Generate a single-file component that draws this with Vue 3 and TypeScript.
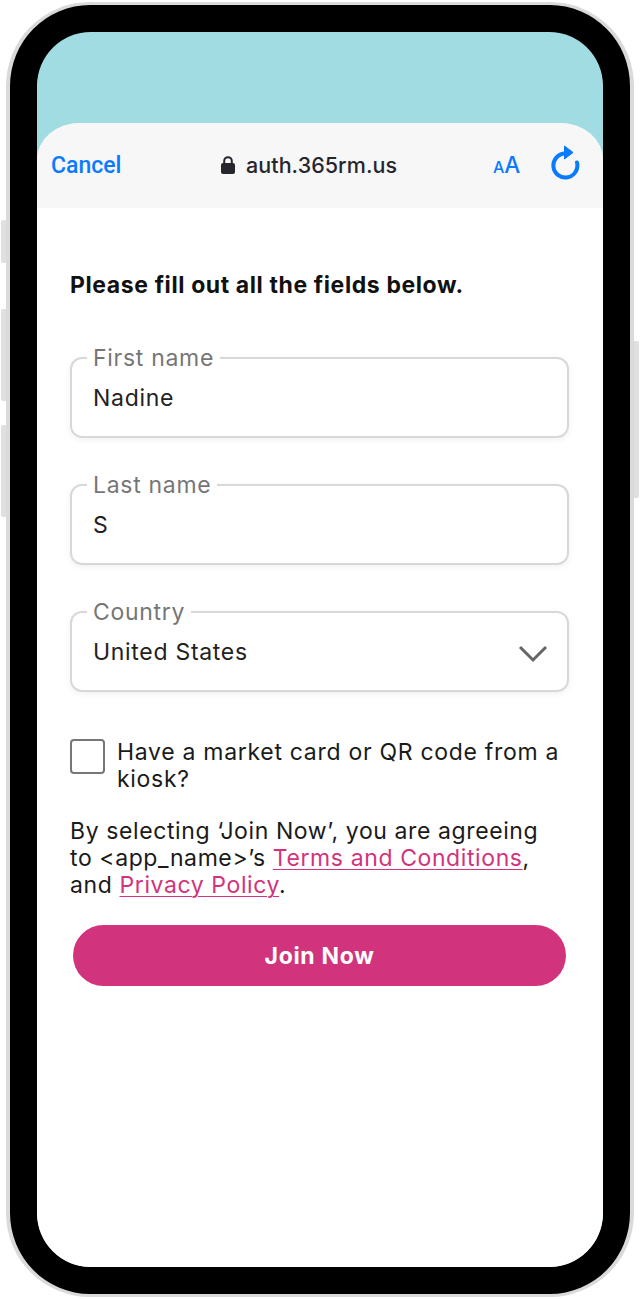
<script setup lang="ts">
interface Field {
  label: string
  value: string
  select?: boolean
}
const fields: Field[] = [
  { label: 'First name', value: 'Nadine' },
  { label: 'Last name', value: 'S' },
  { label: 'Country', value: 'United States', select: true },
]
</script>

<template>
  <div class="page">
    <i class="side side-a"></i>
    <i class="side side-b"></i>
    <i class="side side-c"></i>
    <i class="side side-d"></i>
    <div class="phone">
      <div class="screen">
        <div class="sheet">
          <header class="bar">
            <span class="cancel">Cancel</span>
            <span class="address">
              <svg class="lock" width="14" height="18" viewBox="0 0 14 18">
                <path d="M3.200 8V5a3.800 3.800 0 0 1 7.600 0v3" fill="none" stroke="#26262e" stroke-width="2" />
                <rect x="0" y="7" width="14" height="11" rx="2" fill="#26262e" />
              </svg>
              <span>auth.365rm.us</span>
            </span>
            <span class="aa"><small>A</small>A</span>
            <svg class="reload" width="30" height="36" viewBox="0 0 30 36">
              <path d="M27 17.500A12 12 0 1 1 15 8.500" fill="none" stroke="#0a7aff" stroke-width="4" stroke-linecap="round" />
              <path d="M14.500 1 L23 7.500 L14.500 14 Z" fill="#0a7aff" stroke="#0a7aff" stroke-width="1" stroke-linejoin="round" />
            </svg>
          </header>
          <main class="form">
            <h1 class="title">Please fill out all the fields below.</h1>
            <div class="fields">
              <div v-for="f in fields" :key="f.label" class="field">
                <span class="legend">{{ f.label }}</span>
                <span class="value">{{ f.value }}</span>
                <svg v-if="f.select" class="chevron" width="30" height="18" viewBox="0 0 30 18">
                  <path d="M2 2 L15 15 L28 2" fill="none" stroke="#666" stroke-width="3" />
                </svg>
              </div>
            </div>
            <div class="check-row">
              <span class="box"></span>
              <span>Have a market card or QR code from a kiosk?</span>
            </div>
            <p class="legal">
              By selecting ‘Join Now’, you are agreeing to &lt;app_name&gt;’s
              <a class="link">Terms and Conditions</a>, and <a class="link">Privacy Policy</a>.
            </p>
            <button class="join" type="button">Join Now</button>
          </main>
        </div>
      </div>
    </div>
  </div>
</template>

<style>
html, body { margin: 0; background: #fff; }
</style>

<style scoped>
.page {
  position: relative;
  width: 640px;
  height: 1299px;
  padding: 2px 6px;
  box-sizing: border-box;
  font-family: Inter, "Liberation Sans", sans-serif;
  overflow: hidden;
}
.side {
  position: absolute;
  width: 5px;
  background: #e0e0e0;
  border-radius: 2px 0 0 2px;
}
.side-a { left: 1px; top: 220px; height: 43px; }
.side-b { left: 1px; top: 309px; height: 92px; }
.side-c { left: 1px; top: 425px; height: 92px; }
.side-d { left: 634px; top: 341px; height: 157px; border-radius: 0 2px 2px 0; }
.phone {
  position: relative;
  height: 1295px;
  box-sizing: border-box;
  padding: 27px;
  background: #000;
  border: 3px solid #dadada;
  border-left-width: 4px;
  border-right-width: 4px;
  border-radius: 84px;
}
.screen {
  height: 100%;
  background: #a2dce3;
  border-radius: 54px;
  overflow: hidden;
  padding-top: 91px;
  box-sizing: border-box;
}
.sheet {
  height: 100%;
  background: #fff;
  border-radius: 43px 43px 0 0 / 37px 37px 0 0;
  overflow: hidden;
}
.bar {
  height: 85px;
  background: #f7f7f7;
  display: flex;
  align-items: center;
  padding: 0 23px 0 14px;
  box-sizing: border-box;
}
.cancel {
  color: #0a7aff;
  font-family: Roboto, Inter, sans-serif;
  font-size: 23px;
  font-weight: 500;
  width: 170px;
  flex: none;
}
.address {
  display: flex;
  align-items: center;
  gap: 11px;
  width: 272px;
  flex: none;
  color: #26262e;
  font-size: 21.500px;
  font-weight: 500;
  letter-spacing: 0.05px;
  margin-top: -1px;
}
.aa {
  color: #0a7aff;
  font-size: 22.500px;
  font-weight: 500;
  width: 58px;
  flex: none;
  line-height: 1;
}
.aa small { font-size: 16px; }
.reload { flex: none; margin-top: -5px; margin-left: -1px; }
.form {
  padding: 64px 34px 0 33px;
  color: #1a1a1a;
  font-size: 23px;
  line-height: 27px;
  letter-spacing: 0.7px;
}
.title {
  margin: 0 0 58px;
  font-size: 23px;
  line-height: 27px;
  font-weight: 700;
  letter-spacing: 0.6px;
  color: #111;
}
.fields { display: flex; flex-direction: column; gap: 46px; }
.field {
  position: relative;
  height: 81px;
  box-sizing: border-box;
  border: 2px solid #d8d8d8;
  border-radius: 12px;
  box-shadow: 0 2px 6px rgba(0, 0, 0, 0.06);
  display: flex;
  align-items: center;
  padding: 0 21px;
}
.legend {
  position: absolute;
  left: 15px;
  top: -14px;
  padding: 0 6px;
  background: #fff;
  color: #767676;
  font-size: 23px;
  line-height: 26px;
}
.value { color: #222; margin-top: 1px; }
.chevron { position: absolute; right: 19px; top: 32px; }
.check-row {
  margin-top: 47px;
  display: flex;
  gap: 12px;
  align-items: flex-start;
}
.box {
  flex: none;
  width: 35px;
  height: 35px;
  box-sizing: border-box;
  border: 2px solid #777;
  border-radius: 4px;
}
.legal { margin: 25px 0 26px; padding-right: 20px; letter-spacing: 0.6px; }
.link { color: #d1347c; text-decoration: underline; text-underline-offset: 3px; text-decoration-thickness: 1px; }
.join {
  display: block;
  margin-left: 3px;
  width: 493px;
  height: 61px;
  border: 0;
  border-radius: 31px;
  background: #d1347c;
  color: #fff;
  font-family: inherit;
  font-size: 23px;
  font-weight: 700;
  letter-spacing: 0.7px;
}
</style>
